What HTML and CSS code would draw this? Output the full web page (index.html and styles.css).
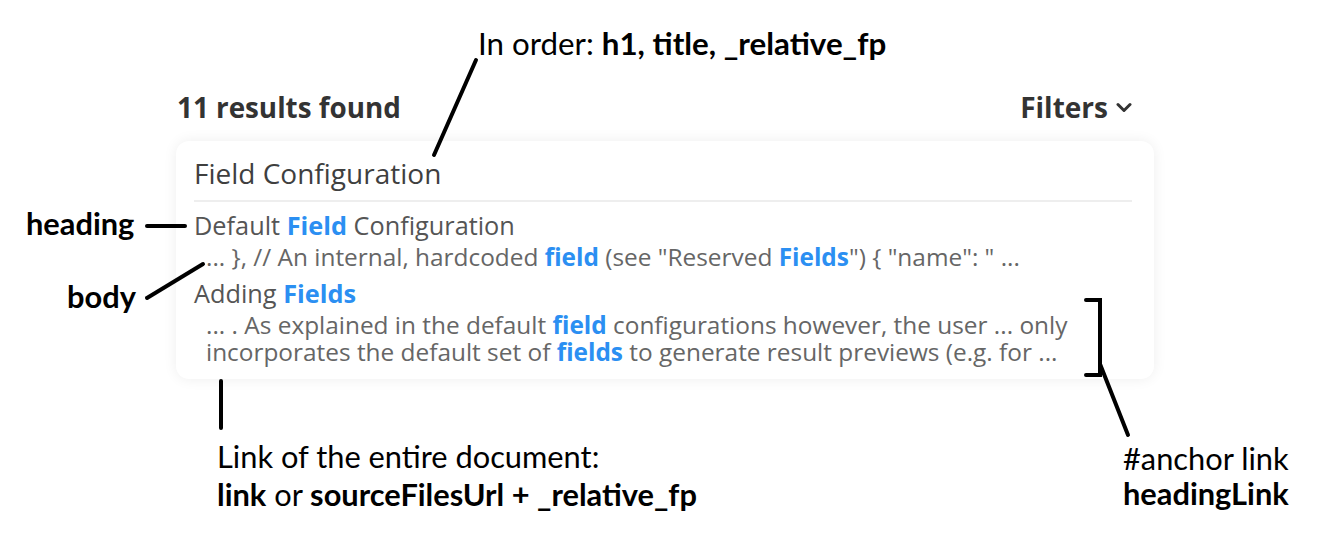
FILE: index.html
```html
<!DOCTYPE html>
<html>
<head>
<meta charset="utf-8">
<link rel="stylesheet" href="styles.css">
</head>
<body>
<div class="canvas">
  <main class="results">
    <header class="results-header">
      <h2 class="count">11 results found</h2>
      <button class="filters">Filters
        <svg class="chev" width="16" height="11" viewBox="0 0 16 11"><path d="M2 2.5 L8 8.5 L14 2.5" fill="none" stroke="#333" stroke-width="3" stroke-linecap="round" stroke-linejoin="round"/></svg>
      </button>
    </header>
    <article class="card">
      <h3 class="doc-title">Field Configuration</h3>
      <div class="hit">
        <div class="hit-heading">Default <mark>Field</mark> Configuration</div>
        <div class="hit-body">... }, // An internal, hardcoded <mark>field</mark> (see "Reserved <mark>Fields</mark>") { "name": " ...</div>
      </div>
      <div class="hit">
        <div class="hit-heading">Adding <mark>Fields</mark></div>
        <div class="hit-body">... . As explained in the default <mark>field</mark> configurations however, the user ... only<br>incorporates the default set of <mark>fields</mark> to generate result previews (e.g. for ...</div>
      </div>
    </article>
  </main>

  <svg class="lines" width="1324" height="546" viewBox="0 0 1324 546">
    <g stroke="#000" stroke-width="4" stroke-linecap="round" fill="none">
      <line x1="434" y1="155" x2="476" y2="60"/>
      <line x1="147" y1="226" x2="185" y2="226"/>
      <line x1="147" y1="298" x2="203" y2="264"/>
      <line x1="221" y1="381" x2="221" y2="428"/>
      <polyline points="1086,300 1100,300 1100,375 1086,375"/>
      <line x1="1100" y1="364" x2="1128" y2="435"/>
    </g>
  </svg>

  <div class="note note-top">In order: <b>h1, title, _relative_fp</b></div>
  <div class="note note-heading"><b>heading</b></div>
  <div class="note note-body"><b>body</b></div>
  <div class="note note-link">Link of the entire document:<br><b>link</b> or <b>sourceFilesUrl + _relative_fp</b></div>
  <div class="note note-anchor">#anchor link<br><b>headingLink</b></div>
</div>
</body>
</html>
```
FILE: styles.css
```css
html, body {
  margin: 0;
  padding: 0;
  background: #fff;
}
.canvas {
  position: relative;
  width: 1324px;
  height: 546px;
  overflow: hidden;
  font-family: "Open Sans", "Noto Sans", sans-serif;
}
.results {
  width: 978px;
  margin-left: 176px;
  padding-top: 88px;
}
.results-header {
  display: flex;
  justify-content: space-between;
  align-items: center;
  margin-right: 22px;
  margin-left: 1px;
  height: 38px;
}
.count {
  margin: 0;
  font-size: 27.8px;
  font-weight: 700;
  color: #333;
  line-height: 38px;
}
.filters {
  border: 0;
  background: none;
  padding: 0;
  font-family: inherit;
  font-size: 28px;
  font-weight: 700;
  color: #333;
  display: flex;
  align-items: center;
  gap: 8px;
  line-height: 38px;
}
.chev { margin-top: 1px; }
.card {
  margin-top: 15px;
  background: #fff;
  border-radius: 13px;
  box-shadow: 0 0 14px rgba(0, 0, 0, 0.07);
  padding: 14px 22px 14px 18px;
}
.doc-title {
  margin: 0;
  font-size: 28px;
  font-weight: 400;
  color: #3f3f3f;
  line-height: 36px;
  padding-bottom: 9px;
  border-bottom: 2px solid #eeeeee;
}
.hit { margin-top: 8px; }
.hit-heading {
  font-size: 25.3px;
  line-height: 31px;
  color: #555;
}
.hit-body {
  margin-top: 2px;
  padding-left: 12px;
  font-size: 24.4px;
  line-height: 27px;
  color: #666;
}
mark {
  background: none;
  color: #2b8ff2;
  font-weight: 700;
}
.lines {
  position: absolute;
  left: 0;
  top: 0;
  pointer-events: none;
}
.note {
  position: absolute;
  font-family: Lato, "Open Sans", sans-serif;
  font-size: 30.8px;
  line-height: 38px;
  color: #000;
  white-space: nowrap;
}
.note b { font-weight: 700; }
.note-top { left: 478px; top: 24px; font-size: 31.3px; }
.note-heading { left: 26px; top: 205px; }
.note-body { left: 67px; top: 278px; }
.note-link { left: 217px; top: 438px; }
.note-anchor { left: 1123px; top: 441px; line-height: 35px; }
```
